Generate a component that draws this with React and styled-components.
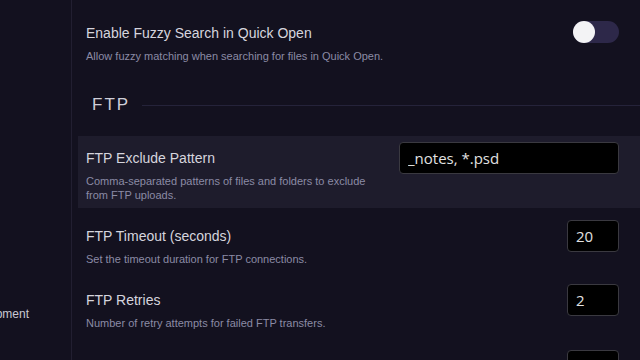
import React from 'react';
import styled, { createGlobalStyle } from 'styled-components';

const GlobalStyle = createGlobalStyle`
    html, body {
        margin: 0;
        padding: 0;
        background: #13111f;
        overflow: hidden;
    }
`;

const Layout = styled.div`
    display: flex;
    width: 640px;
    height: 360px;
    overflow: hidden;
    font-family: "Liberation Sans", Arial, sans-serif;
`;

const Sidebar = styled.nav`
    flex: 0 0 71px;
    border-right: 1px solid #221f31;
    display: flex;
    flex-direction: column;
    justify-content: flex-end;
    padding-bottom: 38px;
    overflow: hidden;
`;

const NavItem = styled.div`
    display: flex;
    justify-content: flex-end;
    padding-right: 42px;
    white-space: nowrap;
    font-size: 12px;
    line-height: 16px;
    color: #c9c8d2;
`;

const Main = styled.main`
    flex: 1;
    min-width: 0;
    padding: 11px 0 0 6px;
    display: flex;
    flex-direction: column;
    gap: 6px;
`;

const Row = styled.div`
    display: flex;
    align-items: flex-start;
    gap: 24px;
    padding: 6px 21px 6px 8px;
    background: ${p => (p.$active ? '#1e1c2c' : 'transparent')};
`;

const Text = styled.div`
    flex: 1;
    min-width: 0;
    padding-top: 6px;
`;

const Title = styled.div`
    font-size: 14px;
    line-height: 20px;
    color: #d6d5de;
`;

const Desc = styled.div`
    margin-top: 6px;
    font-size: 11px;
    line-height: 14px;
    color: #8b8ba5;
`;

const Heading = styled.h2`
    display: flex;
    align-items: center;
    margin: 0;
    padding: 18px 0 13px 14px;
    font-size: 17px;
    line-height: 24px;
    font-weight: normal;
    letter-spacing: 2px;
    color: #cfced8;

    &::after {
        content: '';
        flex: 1;
        height: 1px;
        margin-left: 12px;
        background: #25233a;
    }
`;

const Toggle = styled.div`
    position: relative;
    flex: 0 0 46px;
    height: 22px;
    margin-top: 4px;
    border-radius: 11px;
    background: #2d2849;

    &::before {
        content: '';
        position: absolute;
        left: ${p => (p.$on ? '24px' : '0')};
        top: 0;
        width: 22px;
        height: 22px;
        border-radius: 50%;
        background: #f3f3f5;
    }
`;

const Input = styled.input`
    flex: 0 0 ${p => p.$width}px;
    box-sizing: border-box;
    width: ${p => p.$width}px;
    height: 32px;
    padding: 0 8px;
    background: #000;
    border: 1px solid #3a3940;
    border-radius: 4px;
    color: #e2e2e2;
    font-family: "Open Sans", "DejaVu Sans", sans-serif;
    font-size: 15px;
    outline: none;
`;

const LastRow = styled(Row)`
    margin-top: 2px;
`;

const App = () => {
    return (
        <React.Fragment>
            <GlobalStyle />
            <Layout>
                <Sidebar>
                    <NavItem>Development</NavItem>
                </Sidebar>
                <Main>
                    <Row>
                        <Text>
                            <Title>Enable Fuzzy Search in Quick Open</Title>
                            <Desc>Allow fuzzy matching when searching for files in Quick Open.</Desc>
                        </Text>
                        <Toggle />
                    </Row>

                    <Heading>FTP</Heading>

                    <Row $active>
                        <Text>
                            <Title>FTP Exclude Pattern</Title>
                            <Desc>Comma-separated patterns of files and folders to exclude from FTP uploads.</Desc>
                        </Text>
                        <Input $width={220} defaultValue="_notes, *.psd" />
                    </Row>
                    <Row>
                        <Text>
                            <Title>FTP Timeout (seconds)</Title>
                            <Desc>Set the timeout duration for FTP connections.</Desc>
                        </Text>
                        <Input $width={52} defaultValue="20" />
                    </Row>
                    <Row>
                        <Text>
                            <Title>FTP Retries</Title>
                            <Desc>Number of retry attempts for failed FTP transfers.</Desc>
                        </Text>
                        <Input $width={52} defaultValue="2" />
                    </Row>
                    <LastRow>
                        <Text>
                            <Title>FTP Concurrent Uploads</Title>
                            <Desc>Maximum number of files uploaded at the same time.</Desc>
                        </Text>
                        <Input $width={52} defaultValue="5" />
                    </LastRow>
                </Main>
            </Layout>
        </React.Fragment>
    );
};

export default App;
